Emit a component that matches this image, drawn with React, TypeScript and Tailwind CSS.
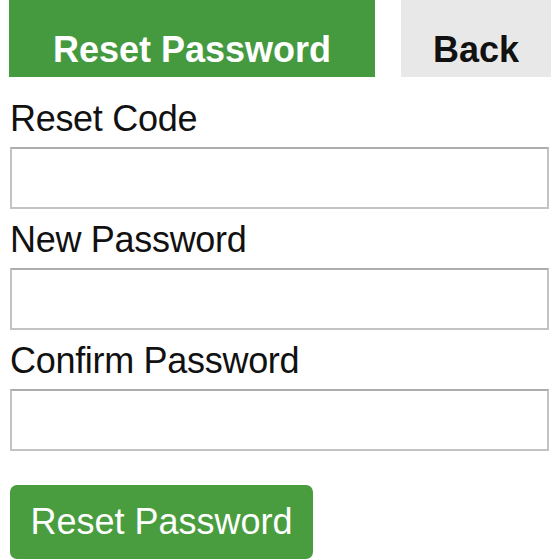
import React from "react";

const fields = ["Reset Code", "New Password", "Confirm Password"];

export default function App() {
  return (
    <div className="h-[560px] w-[560px] overflow-hidden bg-white font-['Liberation_Sans',Arial,sans-serif] text-[36px] leading-[40px] text-[#111]">
      <div className="flex pl-[9px]">
        <button className="h-[77px] w-[366px] bg-[#459a40] pt-[22px] text-center align-top font-bold text-white">
          Reset Password
        </button>
        <button className="ml-[26px] h-[77px] w-[150px] bg-[#e8e8e8] pt-[22px] text-center align-top font-bold text-[#111]">
          Back
        </button>
      </div>

      <form className="px-[10px] pt-[22px]">
        {fields.map((label, i) => (
          <div key={label} className={i === 0 ? "" : "mt-[11px]"}>
            <label className="block tracking-[-0.3px]">{label}</label>
            <input
              type="text"
              className="mt-[8px] block h-[62px] w-[539px] border-2 border-[#c3c3c3] border-t-[#adadad] bg-white outline-none"
            />
          </div>
        ))}

        <button
          type="button"
          className="mt-[34px] flex h-[74px] w-[303px] items-center justify-center rounded-[7px] bg-[#4a9d3f] text-white"
        >
          Reset Password
        </button>
      </form>
    </div>
  );
}
